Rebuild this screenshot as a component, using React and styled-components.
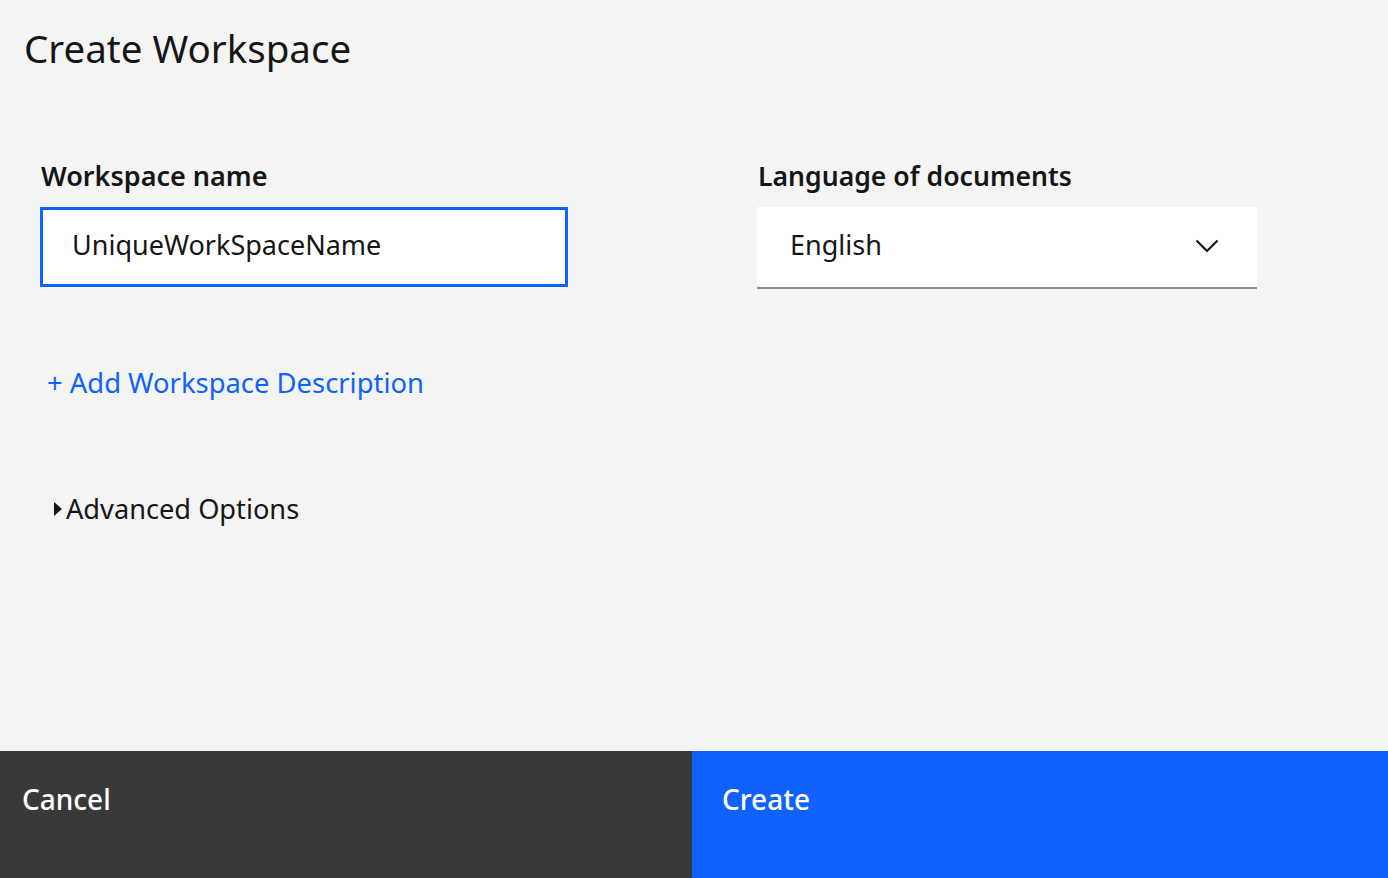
import React, { useState } from 'react';
import styled, { createGlobalStyle } from 'styled-components';

const GlobalStyle = createGlobalStyle`
    html, body {
        margin: 0;
        padding: 0;
        background: #f4f4f4;
    }
    body {
        font-family: "Noto Sans", "Liberation Sans", sans-serif;
        color: #161616;
    }
`;

const languages = ['English', 'French', 'German', 'Spanish', 'Japanese'];

const App = () => {
    const [name, setName] = useState('UniqueWorkSpaceName');
    const [language, setLanguage] = useState('English');

    return (
        <>
            <GlobalStyle />
            <Page>
                <Content>
                    <Title>Create Workspace</Title>
                    <FormRow>
                        <Field>
                            <Label htmlFor="workspace-name">Workspace name</Label>
                            <TextInput
                                id="workspace-name"
                                value={name}
                                onChange={(e) => setName(e.target.value)}
                            />
                        </Field>
                        <Field>
                            <Label htmlFor="workspace-language">Language of documents</Label>
                            <SelectBox>
                                <Select
                                    id="workspace-language"
                                    value={language}
                                    onChange={(e) => setLanguage(e.target.value)}
                                >
                                    {languages.map((l) => <option key={l}>{l}</option>)}
                                </Select>
                                <Chevron width="24" height="14" viewBox="0 0 24 14">
                                    <path d="M1.5 1.5 L12 12 L22.5 1.5" fill="none" stroke="#161616" strokeWidth="2.2" />
                                </Chevron>
                            </SelectBox>
                        </Field>
                    </FormRow>
                    <AddLink href="#">+ Add Workspace Description</AddLink>
                    <Disclosure>
                        <Caret />
                        Advanced Options
                    </Disclosure>
                </Content>
                <Footer>
                    <FooterButton>Cancel</FooterButton>
                    <FooterButton primary>Create</FooterButton>
                </Footer>
            </Page>
        </>
    );
};

const Page = styled.div`
    display: flex;
    flex-direction: column;
    min-height: 100vh;
`;

const Content = styled.div`
    flex: 1;
    display: flex;
    flex-direction: column;
    align-items: flex-start;
`;

const Title = styled.h1`
    margin: 23px 0 0 24px;
    font-size: 38.5px;
    line-height: 50px;
    font-weight: 400;
    letter-spacing: 0;
`;

const FormRow = styled.div`
    display: grid;
    grid-template-columns: 528px 500px;
    column-gap: 189px;
    margin: 87px 0 0 40px;
`;

const Field = styled.div`
    display: flex;
    flex-direction: column;
`;

const Label = styled.label`
    font-size: ${(p) => (p.htmlFor === 'workspace-language' ? 26.6 : 27)}px;
    line-height: 32px;
    font-weight: 600;
    margin-left: 1px;
    margin-bottom: 15px;
`;

const TextInput = styled.input`
    box-sizing: border-box;
    height: 80px;
    border: 3px solid #0f62fe;
    background: #fff;
    padding: 0 29px 5px;
    font-family: inherit;
    font-size: 27px;
    color: #161616;
    outline: none;
`;

const SelectBox = styled.div`
    position: relative;
    height: 82px;
    background: #fff;
    border-bottom: 2px solid #8d8d8d;
    box-sizing: border-box;
`;

const Select = styled.select`
    appearance: none;
    width: 100%;
    height: 100%;
    border: none;
    background: transparent;
    padding: 0 33px 5px;
    font-family: inherit;
    font-size: 27px;
    color: #161616;
    outline: none;
`;

const Chevron = styled.svg`
    position: absolute;
    right: 38px;
    top: 32px;
    pointer-events: none;
`;

const AddLink = styled.a`
    margin: 77px 0 0 47px;
    font-size: 27.4px;
    line-height: 34px;
    color: #0f62fe;
    text-decoration: none;
`;

const Disclosure = styled.div`
    display: flex;
    align-items: center;
    gap: 4px;
    margin: 92px 0 0 54px;
    font-size: 27.2px;
    line-height: 34px;
`;

const Caret = styled.span`
    width: 0;
    height: 0;
    border-top: 7px solid transparent;
    border-bottom: 7px solid transparent;
    border-left: 8px solid #161616;
`;

const Footer = styled.div`
    display: grid;
    grid-template-columns: 692px 1fr;
    height: 127px;
`;

const FooterButton = styled.button`
    display: flex;
    align-items: flex-start;
    border: none;
    margin: 0;
    padding: 29px 0 0 ${(p) => (p.primary ? 30 : 22)}px;
    background: ${(p) => (p.primary ? '#0f62fe' : '#393939')};
    color: #fff;
    font-family: inherit;
    font-size: 28px;
    font-weight: 500;
    text-align: left;
    cursor: pointer;
`;

export default App;
